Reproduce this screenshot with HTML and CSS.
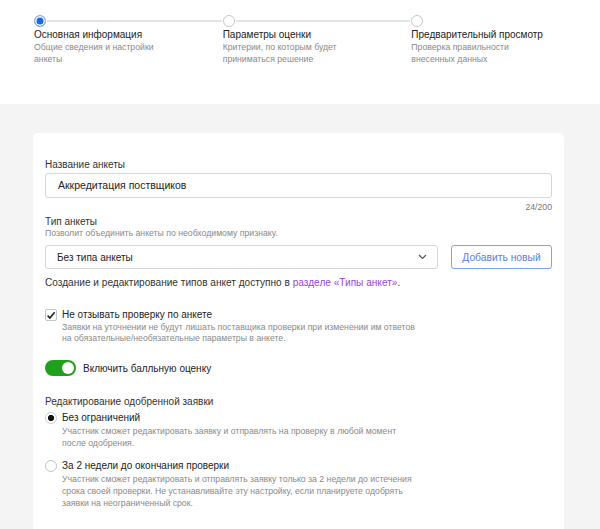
FILE: index.html
```html
<!DOCTYPE html>
<html lang="ru">
<head>
<meta charset="utf-8">
<link rel="stylesheet" href="styles.css">
</head>
<body>
<div class="steps">
  <div class="step">
    <div class="step-head"><span class="dot active"></span><span class="line"></span></div>
    <div class="step-title">Основная информация</div>
    <div class="step-sub">Общие сведения и настройки<br>анкеты</div>
  </div>
  <div class="step">
    <div class="step-head"><span class="dot"></span><span class="line"></span></div>
    <div class="step-title">Параметры оценки</div>
    <div class="step-sub">Критерии, по которым будет<br>приниматься решение</div>
  </div>
  <div class="step">
    <div class="step-head"><span class="dot"></span></div>
    <div class="step-title">Предварительный просмотр</div>
    <div class="step-sub">Проверка правильности<br>внесенных данных</div>
  </div>
</div>
<div class="main">
  <div class="card">
    <div class="label">Название анкеты</div>
    <div class="input">Аккредитация поствщиков</div>
    <div class="counter">24/200</div>

    <div class="label label-type">Тип анкеты</div>
    <div class="hint">Позволит объединить анкеты по необходимому признаку.</div>
    <div class="type-row">
      <div class="select">
        <span>Без типа анкеты</span>
        <svg class="chev" width="9" height="6" viewBox="0 0 9 6"><path d="M1 1l3.5 3.5L8 1" fill="none" stroke="#555" stroke-width="1.2"/></svg>
      </div>
      <div class="btn">Добавить новый</div>
    </div>
    <div class="info">Создание и редактирование типов анкет доступно в <span class="link">разделе «Типы анкет»</span>.</div>

    <div class="opt opt-check">
      <span class="checkbox"><svg width="10" height="9" viewBox="0 0 10 9"><path d="M1.6 4.6l2.3 2.5L8.6 1.3" fill="none" stroke="#222" stroke-width="1.6"/></svg></span>
      <div>
        <div class="opt-title">Не отзывать проверку по анкете</div>
        <div class="opt-desc desc-tight">Заявки на уточнении не будут лишать поставщика проверки при изменении им ответов<br>на обязательные/необязательные параметры в анкете.</div>
      </div>
    </div>

    <div class="toggle-row">
      <span class="toggle"><span class="knob"></span></span>
      <span class="toggle-label">Включить балльную оценку</span>
    </div>

    <div class="label label-edit">Редактирование одобренной заявки</div>
    <div class="opt opt-radio">
      <span class="radio checked"></span>
      <div>
        <div class="opt-title">Без ограничений</div>
        <div class="opt-desc">Участник сможет редактировать заявку и отправлять на проверку в любой момент<br>после одобрения.</div>
      </div>
    </div>
    <div class="opt opt-radio opt-radio2">
      <span class="radio"></span>
      <div>
        <div class="opt-title">За 2 недели до окончания проверки</div>
        <div class="opt-desc">Участник сможет редактировать и отправлять заявку только за 2 недели до истечения<br>срока своей проверки. Не устанавливайте эту настройку, если планируете одобрять<br>заявки на неограниченный срок.</div>
      </div>
    </div>
  </div>
</div>
</body>
</html>
```

FILE: styles.css
```css
html, body {
  margin: 0;
  padding: 0;
}
body {
  font-family: "Liberation Sans", Arial, sans-serif;
  color: #333;
  background: #f4f4f4;
  height: 529px;
  overflow: hidden;
}
.steps {
  background: #fff;
  height: 104px;
  box-sizing: border-box;
  padding: 15px 0 0 34px;
  display: flex;
}
.step {
  width: 190px;
}
.step-head {
  display: flex;
  align-items: center;
  height: 12px;
}
.dot {
  width: 12px;
  height: 12px;
  box-sizing: border-box;
  border: 1px solid #c8c8c8;
  border-radius: 50%;
  background: #fff;
  flex: none;
}
.dot.active {
  border-color: #8fb5f0;
  background: #1a66e6;
  box-shadow: inset 0 0 0 1.5px #fff;
}
.line {
  flex: 1;
  height: 2px;
  background: #e4e4e4;
  margin: 0 1px;
}
.step-title {
  font-size: 10px;
  line-height: 12px;
  margin-top: 2px;
  color: #222;
}
.step-sub {
  font-size: 8.7px;
  line-height: 12px;
  color: #8a8a8a;
}
.main {
  padding: 29px 0 0 33px;
}
.card {
  width: 531px;
  height: 420px;
  background: #fff;
  border-radius: 5px;
  box-sizing: border-box;
  padding: 25px 12px 0 12px;
}
.label {
  font-size: 10px;
  line-height: 14px;
  color: #333;
}
.input {
  margin-top: 1px;
  height: 25px;
  box-sizing: border-box;
  border: 1px solid #d6d6d6;
  border-radius: 3px;
  font-size: 10.5px;
  line-height: 23px;
  padding-left: 12px;
  color: #222;
}
.counter {
  text-align: right;
  font-size: 8.7px;
  line-height: 12px;
  color: #777;
  margin-top: 3px;
}
.label-type {
  margin-top: 3px;
  line-height: 11px;
}
.hint {
  font-size: 8.7px;
  line-height: 12px;
  color: #8a8a8a;
}
.type-row {
  display: flex;
  gap: 13px;
  margin-top: 6px;
}
.select {
  width: 393px;
  height: 24px;
  box-sizing: border-box;
  border: 1px solid #d6d6d6;
  border-radius: 3px;
  display: flex;
  align-items: center;
  justify-content: space-between;
  padding: 0 10px 0 11px;
  font-size: 10px;
  color: #222;
}
.btn {
  flex: 1;
  height: 24px;
  box-sizing: border-box;
  border: 1px solid #7aa6ee;
  border-radius: 3px;
  color: #5a7ee0;
  font-size: 10.3px;
  display: flex;
  align-items: center;
  justify-content: center;
}
.info {
  margin-top: 7px;
  font-size: 10.1px;
  line-height: 14px;
  color: #333;
}
.link {
  color: #9a45e0;
}
.opt {
  display: flex;
  gap: 5px;
}
.opt-check {
  margin-top: 18px;
}
.checkbox {
  width: 12px;
  height: 12px;
  box-sizing: border-box;
  border: 1px solid #c4c4c4;
  border-radius: 2px;
  display: flex;
  align-items: center;
  justify-content: center;
  margin-top: 1px;
  flex: none;
}
.opt-title {
  font-size: 10px;
  line-height: 14px;
  color: #222;
}
.opt-desc {
  font-size: 8.7px;
  line-height: 12px;
  color: #8a8a8a;
}
.desc-tight {
  line-height: 11px;
}
.toggle-row {
  display: flex;
  align-items: center;
  gap: 7px;
  margin-top: 16px;
}
.toggle {
  width: 31px;
  height: 16px;
  border-radius: 8px;
  background: #1fa01a;
  position: relative;
  flex: none;
}
.knob {
  position: absolute;
  right: 2px;
  top: 2px;
  width: 12px;
  height: 12px;
  border-radius: 50%;
  background: #fff;
}
.toggle-label {
  font-size: 10px;
  color: #222;
}
.label-edit {
  margin-top: 19px;
}
.opt-radio {
  margin-top: 2px;
}
.opt-radio2 {
  margin-top: 10px;
}
.radio {
  width: 12px;
  height: 12px;
  box-sizing: border-box;
  border: 1px solid #c4c4c4;
  border-radius: 50%;
  margin-top: 1px;
  flex: none;
  background: #fff;
}
.radio.checked {
  border-color: #cfcfcf;
  background: radial-gradient(circle, #111 0 2.8px, #fff 3.3px);
}
```
